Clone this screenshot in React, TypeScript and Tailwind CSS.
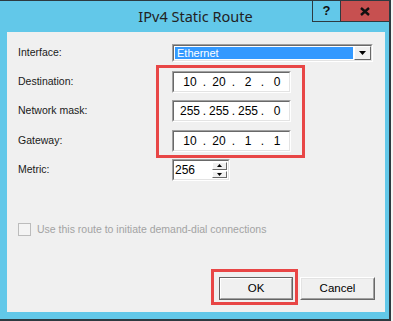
import React from "react";

// classic sunken 3D frame (edit boxes, combo)
function Sunken({
  className,
  children,
}: {
  className: string;
  children: React.ReactNode;
}) {
  return (
    <div
      className={`${className} border border-t-[#a0a0a0] border-l-[#a0a0a0] border-r-white border-b-white`}
    >
      <div className="h-full w-full border border-t-[#696969] border-l-[#696969] border-r-[#e3e3e3] border-b-[#e3e3e3] bg-white">
        {children}
      </div>
    </div>
  );
}

function IpBox({ parts }: { parts: string[] }) {
  return (
    <Sunken className="w-[119px] h-[22px]">
      <div className="flex h-full items-center pl-[6px] text-[12px] text-black">
        {parts.map((p, i) => (
          <React.Fragment key={i}>
            {i > 0 && (
              <span className="w-[9px] flex justify-center">.</span>
            )}
            <span className="w-[20px] flex justify-center">{p}</span>
          </React.Fragment>
        ))}
      </div>
    </Sunken>
  );
}

function Row({
  label,
  className,
  children,
}: {
  label: string;
  className: string;
  children: React.ReactNode;
}) {
  return (
    <div className={`flex items-center ${className}`}>
      <div className="w-[154px]">{label}</div>
      {children}
    </div>
  );
}

function SpinBtn({ up }: { up?: boolean }) {
  return (
    <div className="flex-1 flex items-center justify-center bg-[#f0f0f0] border border-t-white border-l-white border-r-[#696969] border-b-[#696969]">
      <svg width="5" height="3" viewBox="0 0 5 3">
        <path d={up ? "M2.5 0 L5 3 L0 3 Z" : "M0 0 L5 0 L2.5 3 Z"} fill="#000" />
      </svg>
    </div>
  );
}

export default function App() {
  return (
    <div
      className="w-[393px] h-[321px] bg-[#f4f4f4]"
      style={{ fontFamily: '"Liberation Sans", Arial, sans-serif' }}
    >
      <div className="w-[391px] h-[321px] bg-[#62c8e9] border-t border-r-2 border-b-2 border-[#2d3a40] flex flex-col">
        {/* Title bar */}
        <div className="relative h-[31px] flex items-center justify-center">
          <span
            className="text-[14.5px] text-[#222] pl-[2px]"
            style={{ fontFamily: '"Noto Sans", sans-serif' }}
          >
            IPv4 Static Route
          </span>
          <div className="absolute top-0 right-0 flex">
            <div className="w-[29px] h-[21px] border-l border-r border-b border-[#2d3a40] flex items-center justify-center text-[13px] font-bold text-[#111]">
              ?
            </div>
            <div className="w-[48px] h-[21px] bg-[#c75050] border-b border-[#2d3a40] flex items-center justify-center">
              <svg width="10" height="9" viewBox="0 0 10 9">
                <path
                  d="M1 1 L9 8 M9 1 L1 8"
                  stroke="#111"
                  strokeWidth="2.4"
                  fill="none"
                />
              </svg>
            </div>
          </div>
        </div>

        {/* Client area */}
        <div className="relative ml-[7px] w-[378px] h-[280px] bg-[#f0f0f0] flex flex-col text-[10.5px] text-[#1a1a1a]">
          <div className="pt-[12px] pl-[11px] flex flex-col">
            <Row label="Interface:" className="h-[18px]">
              <Sunken className="w-[201px] h-[18px]">
                <div className="flex h-full">
                  <div className="flex-1 m-px bg-[#3399ff] text-white pl-[2px] leading-[12px] text-[11px]">
                    Ethernet
                  </div>
                  <div className="w-[17px] h-full bg-[#f0f0f0] border border-t-white border-l-white border-r-[#696969] border-b-[#696969] flex items-center justify-center">
                    <svg width="7" height="4" viewBox="0 0 7 4">
                      <path d="M0 0 L7 0 L3.5 4 Z" fill="#000" />
                    </svg>
                  </div>
                </div>
              </Sunken>
            </Row>
            <Row label="Destination:" className="mt-[9px] h-[22px]">
              <IpBox parts={["10", "20", "2", "0"]} />
            </Row>
            <Row label="Network mask:" className="mt-[7px] h-[22px]">
              <IpBox parts={["255", "255", "255", "0"]} />
            </Row>
            <Row label="Gateway:" className="mt-[8px] h-[22px]">
              <IpBox parts={["10", "20", "1", "1"]} />
            </Row>
            <Row label="Metric:" className="mt-[7px] h-[22px]">
              <Sunken className="w-[58px] h-[22px]">
                <div className="flex h-full items-center">
                  <span className="flex-1 text-[12px] text-black pl-px">
                    256
                  </span>
                  <div className="w-[15px] h-full flex flex-col py-px gap-px mr-px">
                    <SpinBtn up />
                    <SpinBtn />
                  </div>
                </div>
              </Sunken>
            </Row>

            {/* demand-dial checkbox (disabled) */}
            <div className="mt-[42px] flex items-center h-[13px]">
              <div className="w-[13px] h-[13px] border border-[#bcbcbc] bg-[#f4f4f4]" />
              <span className="ml-[6px] text-[#a3a3a3]">
                Use this route to initiate demand-dial connections
              </span>
            </div>
          </div>

          <div className="flex-1" />

          {/* Buttons */}
          <div className="flex justify-end pr-[10px] pb-[12px] gap-[7px] text-[11.5px] text-black">
            <div className="relative">
              <div className="w-[74px] h-[23px] border border-[#646464]">
                <div className="h-full flex items-center justify-center bg-[#f0f0f0] border border-t-white border-l-white border-r-[#a0a0a0] border-b-[#a0a0a0]">
                  OK
                </div>
              </div>
              <div className="absolute -left-[8px] -top-[8px] -right-[5px] -bottom-[5px] border-[3px] border-[#e84646]" />
            </div>
            <div className="w-[75px] h-[23px] border border-t-white border-l-white border-r-[#696969] border-b-[#696969]">
              <div className="h-full flex items-center justify-center bg-[#f0f0f0] border border-t-[#e3e3e3] border-l-[#e3e3e3] border-r-[#a0a0a0] border-b-[#a0a0a0]">
                Cancel
              </div>
            </div>
          </div>

          {/* red highlight around address fields */}
          <div className="absolute left-[149px] top-[33px] w-[149px] h-[93px] border-[3px] border-[#e84646]" />
        </div>
      </div>
    </div>
  );
}
